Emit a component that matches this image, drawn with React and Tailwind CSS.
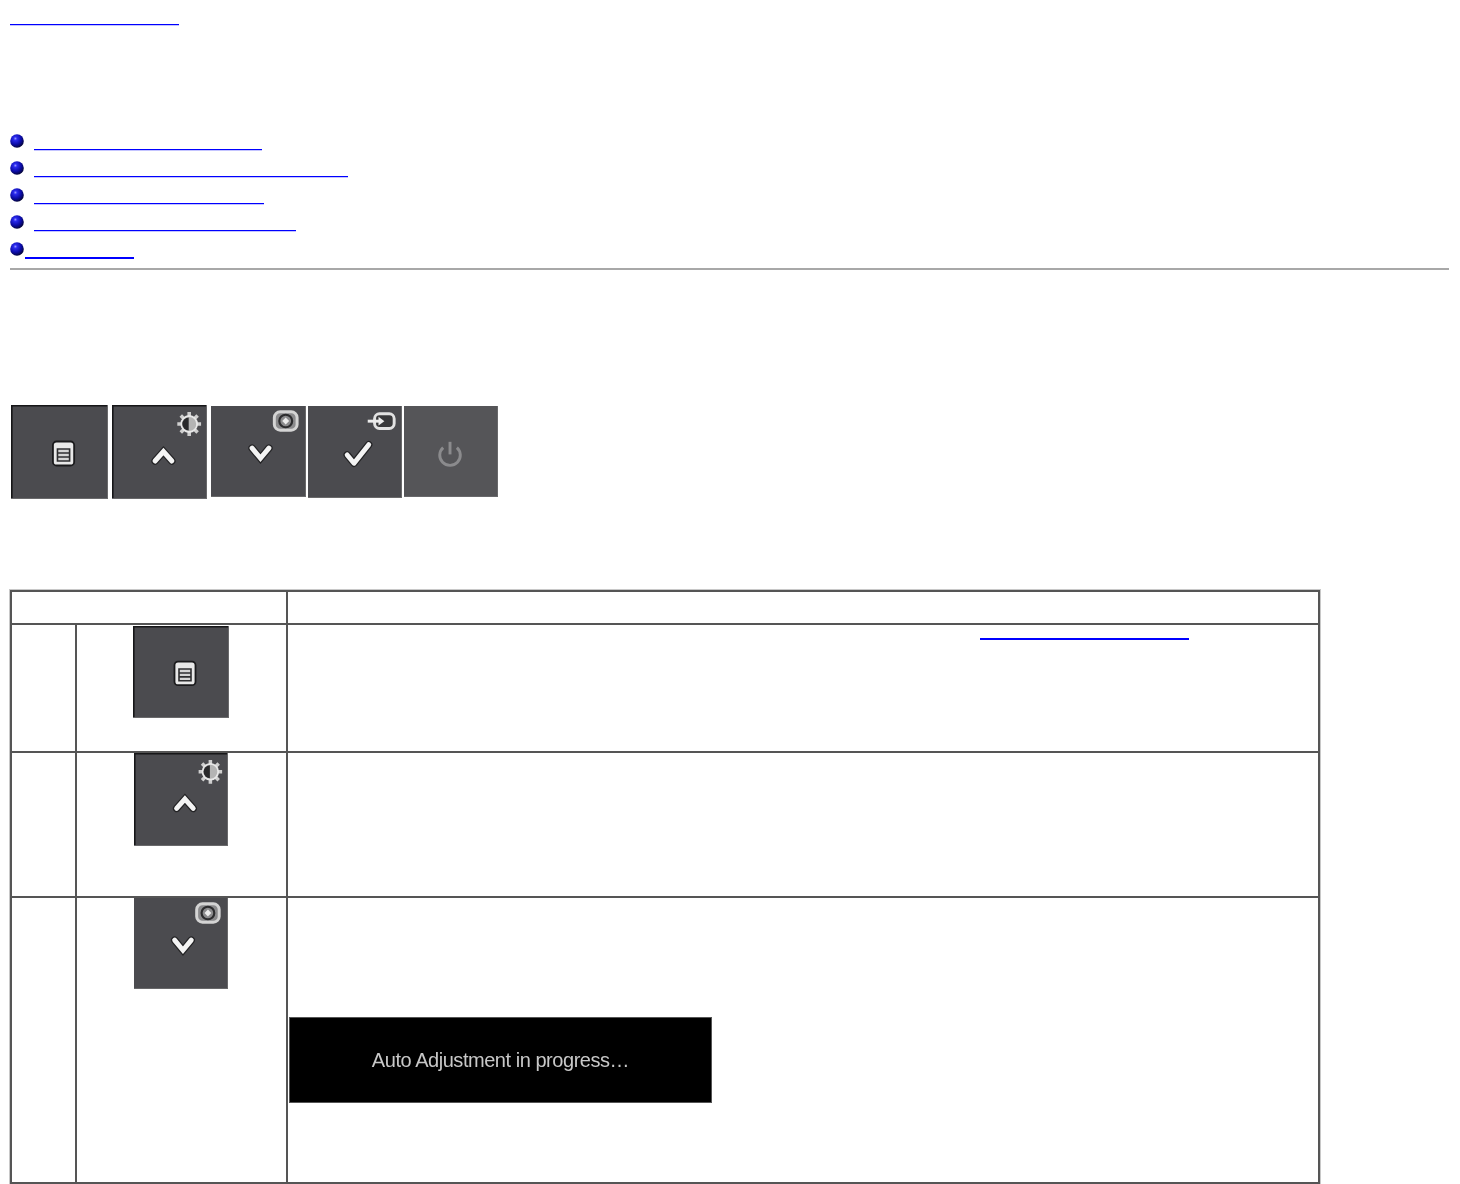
const tocLinks = [
  { width: 'w-[228px]', gap: 'ml-[10px]' },
  { width: 'w-[314px]', gap: 'ml-[10px]' },
  { width: 'w-[230px]', gap: 'ml-[10px]' },
  { width: 'w-[262px]', gap: 'ml-[10px]' },
  { width: 'w-[109px]', gap: 'ml-[1px]', thick: true },
];

function Bullet() {
  return (
    <svg width="14" height="14" viewBox="0 0 14 14" className="block shrink-0">
      <defs>
        <radialGradient id="ball" cx="0.38" cy="0.32" r="0.72">
          <stop offset="0" stopColor="#9a9aff" />
          <stop offset="0.18" stopColor="#2a2aee" />
          <stop offset="0.6" stopColor="#0b0ba6" />
          <stop offset="1" stopColor="#03032c" />
        </radialGradient>
      </defs>
      <circle cx="7" cy="7" r="6.8" fill="url(#ball)" />
    </svg>
  );
}

// stroke twice so the glyph keeps the dark rim it has on the real button
function Rimmed({ d, width = 5 }) {
  return (
    <g fill="none" strokeLinecap="round" strokeLinejoin="miter">
      <path d={d} stroke="#232325" strokeWidth={width + 2.5} />
      <path d={d} stroke="#f4f4f4" strokeWidth={width} />
    </g>
  );
}

function ButtonIcon({ kind }) {
  if (kind === 'menu') {
    return (
      <g>
        <rect x="41.500" y="36.500" width="21" height="24" rx="3.500" fill="#e8e8e8" stroke="#1a1a1c" strokeWidth="1.800" />
        <path d="M46 44h12v12h-12z" fill="#d4d4d4" stroke="#2e2e30" strokeWidth="1.600" />
        <path d="M46 48h12M46 52h12" stroke="#2e2e30" strokeWidth="1.600" />
      </g>
    );
  }
  if (kind === 'up') {
    return (
      <g>
        <Rimmed d="M43.500 56l8.500-9.500 8.500 9.500" />
        <path d="M78 7v24M66 19h24M69.500 10.500l17 17M86.500 10.500l-17 17" stroke="#cfcfcf" strokeWidth="3.600" />
        <circle cx="78" cy="19" r="8" fill="#b4b4b4" stroke="#e8e8e8" strokeWidth="1.800" />
        <path d="M77.500 12.500a6.500 6.500 0 0 0 0 13z" fill="#29292b" />
      </g>
    );
  }
  if (kind === 'down') {
    return (
      <g>
        <Rimmed d="M41.500 43.500l8.500 10.500 8.500-10.500" />
        <rect x="64" y="6" width="23" height="19" rx="6" fill="#8a8a8c" stroke="#d4d4d4" strokeWidth="3" />
        <circle cx="75.500" cy="15.500" r="6.500" fill="none" stroke="#2c2c2e" strokeWidth="2.200" />
        <path d="M75.500 12l3.500 3.500-3.500 3.500-3.500-3.500z" fill="#ececec" />
      </g>
    );
  }
  if (kind === 'check') {
    return (
      <g>
        <g fill="none" strokeLinecap="round" strokeLinejoin="round">
          <path d="M40 50l7 8.500 15-19" stroke="#222224" strokeWidth="7.500" />
          <path d="M40 50l7 8.500 15-19" stroke="#f4f4f4" strokeWidth="5" />
        </g>
        <rect x="68" y="8" width="20" height="15" rx="5" fill="#38383a" stroke="#e2e2e2" strokeWidth="3" />
        <path d="M61 15.500h12" stroke="#ececec" strokeWidth="3" />
        <path d="M72 11l6 4.500-6 4.500z" fill="#ececec" />
      </g>
    );
  }
  return (
    <g fill="none" stroke="#8b8b8d" strokeWidth="3">
      <path d="M40 43a10.500 10.500 0 1 0 14 0" />
      <path d="M47 37v13" />
    </g>
  );
}

function PanelButton({ kind, size, dark, fill = '#4b4b4f' }) {
  return (
    <svg viewBox="0 0 96 94" preserveAspectRatio="none" className={`block shrink-0 blur-[0.5px] ${size}`}>
      <rect width="96" height="94" fill={fill} />
      {dark && <path d="M0 0.800h96M0.800 0v94" stroke="#161618" strokeWidth="1.600" />}
      <path d="M0 93.500h96M95.500 0v94" stroke="#6a6a6c" strokeWidth="1" />
      <ButtonIcon kind={kind} />
    </svg>
  );
}

export default function App() {
  return (
    <div className="min-h-[1184px] bg-white pl-[10px] font-['Liberation_Sans',sans-serif] overflow-hidden">
      <a className="block w-[169px] h-[1px] mt-[24px] bg-[#0000ff] shadow-[0_1px_0_#c4c4ff]" />

      <ul className="mt-[109px]">
        {tocLinks.map((link, i) => (
          <li key={i} className="flex h-[27px]">
            <Bullet />
            <a className={`${link.width} ${link.gap} ${link.thick ? 'h-[2px]' : 'h-[1px] shadow-[0_1px_0_#c4c4ff]'} mt-[15px] bg-[#0000ff]`} />
          </li>
        ))}
      </ul>

      <hr className="w-[1439px] mt-[-1px] border-0 h-[2px] bg-[#a8a8a8]" />

      <div className="flex items-start mt-[135px] pl-[1px]">
        <PanelButton kind="menu" size="w-[97px] h-[94px]" dark />
        <div className="ml-[4px]"><PanelButton kind="up" size="w-[95px] h-[94px]" dark /></div>
        <div className="ml-[4px] mt-[1px]"><PanelButton kind="down" size="w-[95px] h-[91px]" /></div>
        <div className="ml-[2px] mt-[1px]"><PanelButton kind="check" size="w-[94px] h-[92px]" /></div>
        <div className="ml-[2px] mt-[1px]"><PanelButton kind="power" size="w-[94px] h-[91px]" fill="#555558" /></div>
      </div>

      <table className="mt-[91px] w-[1310px] table-fixed border-collapse shadow-[0_0_0_1px_#c8c8c8]">
        <colgroup>
          <col className="w-[65px]" />
          <col className="w-[211px]" />
          <col />
        </colgroup>
        <tbody>
          <tr className="h-[33px]">
            <td colSpan="2" className="border-2 border-[#555] p-0" />
            <td className="border-2 border-[#555] p-0" />
          </tr>
          <tr className="h-[128px]">
            <td className="border-2 border-[#555] p-0" />
            <td className="border-2 border-[#555] p-0 align-top">
              <div className="ml-[56px] mt-[1px]"><PanelButton kind="menu" size="w-[96px] h-[92px]" dark /></div>
            </td>
            <td className="border-2 border-[#555] p-0 align-top">
              <a className="block w-[209px] h-[2px] ml-[692px] mt-[13px] bg-[#0000ff]" />
            </td>
          </tr>
          <tr className="h-[145px]">
            <td className="border-2 border-[#555] p-0" />
            <td className="border-2 border-[#555] p-0 align-top">
              <div className="ml-[57px]"><PanelButton kind="up" size="w-[94px] h-[93px]" dark /></div>
            </td>
            <td className="border-2 border-[#555] p-0" />
          </tr>
          <tr className="h-[286px]">
            <td className="border-2 border-[#555] p-0" />
            <td className="border-2 border-[#555] p-0 align-top">
              <div className="ml-[57px]"><PanelButton kind="down" size="w-[94px] h-[91px]" /></div>
            </td>
            <td className="border-2 border-[#555] p-0 align-top">
              <div className="w-[423px] h-[86px] mt-[119px] ml-[1px] flex items-center justify-center bg-black border border-[#555] text-[20px] font-light text-[#c8c8c8] tracking-[-0.46px] blur-[0.25px]">
                Auto Adjustment in progress…
              </div>
            </td>
          </tr>
        </tbody>
      </table>
    </div>
  );
}
